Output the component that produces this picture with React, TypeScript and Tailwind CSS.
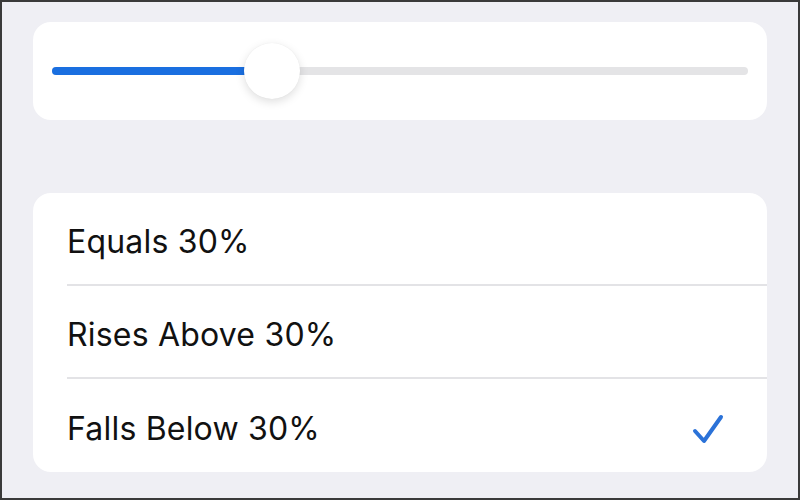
import React from "react";

function Row({ label, checked, last }: { label: string; checked?: boolean; last?: boolean }) {
  return (
    <div className="pl-[34px] h-[93px] flex flex-col">
      <div className={"flex-1 flex items-center pr-[42px] pt-[6px] " + (last ? "" : "border-b-2 border-[#e3e3e6]")}>
        <span className="flex-1 text-[32px] leading-[40px] text-[#111111] tracking-[0.2px]">{label}</span>
        {checked && (
          <svg width="34" height="34" viewBox="0 0 34 34" fill="none" className="mt-[2px]">
            <path d="M4 18 L13 28 L30 4" stroke="#2b72d8" strokeWidth="4" strokeLinecap="round" strokeLinejoin="round" />
          </svg>
        )}
      </div>
    </div>
  );
}

export default function App() {
  return (
    <div
      className="w-[800px] h-[500px] bg-[#efeff4] border-2 border-[#3a3a3a] px-[31px] pt-[20px] flex flex-col"
      style={{ fontFamily: "Inter, 'Noto Sans', sans-serif" }}
    >
      <div className="h-[98px] bg-white rounded-[18px] px-[19px] flex items-center">
        <div className="relative flex-1 h-[8px] rounded-full bg-[#e4e4e6]">
          <div className="absolute left-0 top-0 h-[8px] w-[200px] rounded-full bg-[#1a6fe0]" />
          <div className="absolute left-[192px] top-[-24px] w-[56px] h-[56px] rounded-full bg-white shadow-[0_3px_10px_rgba(0,0,0,0.13),0_0_1px_rgba(0,0,0,0.08)]" />
        </div>
      </div>
      <div className="mt-[73px] h-[279px] bg-white rounded-[18px] flex flex-col">
        <Row label="Equals 30%" />
        <Row label="Rises Above 30%" />
        <Row label="Falls Below 30%" checked last />
      </div>
    </div>
  );
}
